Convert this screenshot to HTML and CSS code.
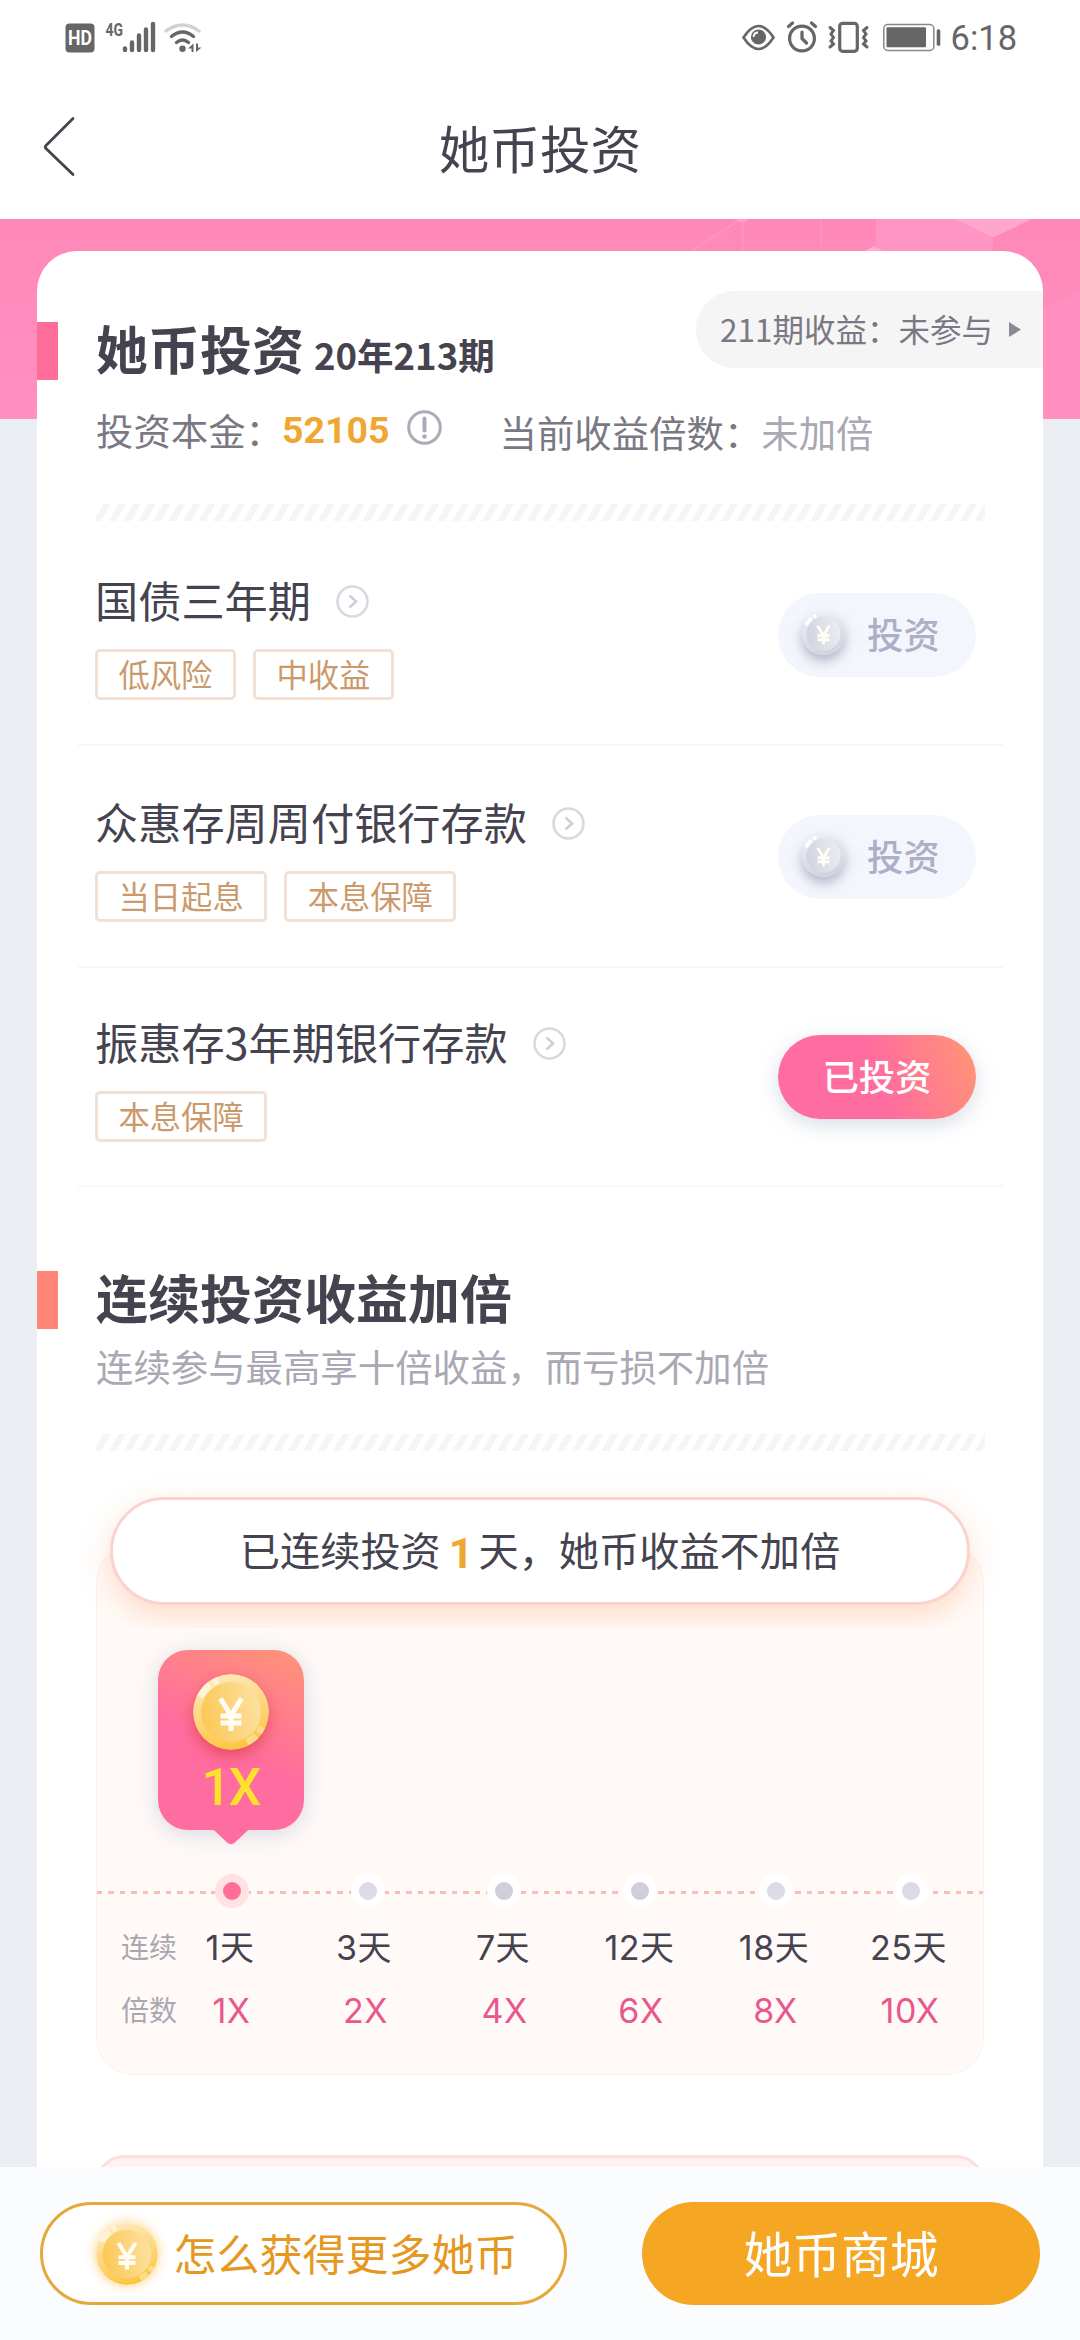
FILE: index.html
```html
<!DOCTYPE html>
<html lang="zh-CN">
<head>
<meta charset="utf-8">
<title>她币投资</title>
<link rel="stylesheet" href="styles.css">
</head>
<body>
<svg width="0" height="0" class="defs" aria-hidden="true">
  <defs>
    <linearGradient id="goldRim" x1="0.3" y1="0" x2="0.6" y2="1"><stop offset="0" stop-color="#ffe9bd"/><stop offset="1" stop-color="#fcc53f"/></linearGradient>
    <linearGradient id="goldFace" x1="0" y1="0.6" x2="1" y2="0.4"><stop offset="0" stop-color="#fbc855"/><stop offset="1" stop-color="#fde0a0"/></linearGradient>
    <linearGradient id="greyRim" x1="0.3" y1="0" x2="0.6" y2="1"><stop offset="0" stop-color="#eceff4"/><stop offset="1" stop-color="#cdd3de"/></linearGradient>
    <linearGradient id="greyFace" x1="0" y1="0.6" x2="1" y2="0.4"><stop offset="0" stop-color="#cfd4de"/><stop offset="1" stop-color="#eaedf2"/></linearGradient>
    <symbol id="yen" viewBox="0 0 76 76"><path d="M27.500 24.500l10.500 17 10.500-17M38 41v16M27.500 42h21M27.500 49h21" fill="none" stroke="#fffdf6" stroke-width="5"/></symbol>
    <symbol id="gold" viewBox="0 0 76 76">
      <circle cx="38" cy="38" r="38" fill="url(#goldRim)"/>
      <circle cx="38" cy="38" r="30" fill="url(#goldFace)"/>
      <path d="M7 23a34 34 0 0 1 10-12M20 8.500a34 34 0 0 1 5-2.500" fill="none" stroke="#fff3d8" stroke-width="7"/>
      <path d="M69 53a34 34 0 0 1-3 6M63 62a34 34 0 0 1-9 6" fill="none" stroke="#fddc8c" stroke-width="7"/>
      <use href="#yen"/>
    </symbol>
    <symbol id="grey" viewBox="0 0 76 76">
      <circle cx="38" cy="38" r="38" fill="url(#greyRim)"/>
      <circle cx="38" cy="38" r="30" fill="url(#greyFace)"/>
      <path d="M7 23a34 34 0 0 1 10-12M20 8.500a34 34 0 0 1 5-2.500" fill="none" stroke="#fff" stroke-width="7"/>
      <use href="#yen"/>
    </symbol>
    <symbol id="more" viewBox="0 0 33 33"><circle cx="16.500" cy="16.500" r="15" fill="none" stroke="#d9d8e1" stroke-width="2.600"/><path d="M13.500 10.500l6.500 6-6.500 6" fill="none" stroke="#d0cfd9" stroke-width="2.600"/></symbol>
  </defs>
</svg>
<div class="page">
  <div class="status">
    <svg class="status-left" width="140" height="50" viewBox="64 11 140 50">
      <rect x="65.500" y="23.500" width="29" height="29" rx="4" fill="#666"/>
      <text x="68" y="45" class="hd" textLength="24" lengthAdjust="spacingAndGlyphs">HD</text>
      <text x="105.500" y="35.500" class="net" textLength="17.500" lengthAdjust="spacingAndGlyphs">4G</text>
      <g stroke="#666" stroke-width="4.400" stroke-linecap="round">
        <path d="M125 48.500v1.500M132 42.500v7.500M139 35.500v14.500M146 29.500v20.500M153 24v26"/>
      </g>
      <g fill="none" stroke-linecap="round" stroke-width="3.400">
        <path d="M166 31q16.500-12 33 0" stroke="#d2d2d2"/>
        <path d="M171.500 36.500q11-9 22 0" stroke="#666"/>
        <path d="M176.500 42.500q6-5 12 0" stroke="#666"/>
      </g>
      <circle cx="182.500" cy="48.700" r="3.200" fill="#666"/>
      <path d="M188 48.500l5.500-5V52h-2v-3.500zM196 43.500v8.500l5.500-4.500h-3.500v-4z" fill="#666"/>
    </svg>
    <svg class="status-right" width="275" height="50" viewBox="741 11 275 50">
      <path d="M743.500 37.500Q758.500 14.500 773.500 37.500Q758.500 60.500 743.500 37.500z" fill="none" stroke="#666" stroke-width="2.600"/>
      <circle cx="758.500" cy="37" r="7.600" fill="#666"/><path d="M753.500 37q.5-4.500 4.500-4.500" fill="none" stroke="#fff" stroke-width="1.800"/>
      <g fill="none" stroke="#666" stroke-width="3.200" stroke-linecap="round">
        <circle cx="802" cy="38.500" r="12.400"/>
        <path d="M802 32v6.500l4.500 4.500M788.500 26.500l4-3.500M815.500 26.500l-4-3.500"/>
        <rect x="839.700" y="23.300" width="17.600" height="28" rx="3"/>
        <path d="M830 27.500l3.500 3-2.500 3.500 2.500 3.500-2.500 3.500 2.500 3-3.500 3M867 27.500l-3.500 3 2.500 3.500-2.500 3.500 2.500 3.500-2.500 3 3.500 3" stroke-width="3"/>
      </g>
      <rect x="883.800" y="24.500" width="50" height="26" rx="4" fill="none" stroke="#888" stroke-width="1.500"/>
      <rect x="886.500" y="27.300" width="39.500" height="20" rx="1" fill="#666"/>
      <rect x="936.700" y="29.300" width="3.600" height="16.500" rx="1.500" fill="#666"/>
      <text x="950.500" y="50" class="clock">6:18</text>
    </svg>
  </div>
  <div class="nav">
    <svg class="back" width="34" height="62" viewBox="0 0 34 62"><path d="M31 2.500L4 29.500q-1.500 1.500 0 3L31 58.500" fill="none" stroke="#45434f" stroke-width="2.800" stroke-linecap="round"/></svg>
    <h1>她币投资</h1>
  </div>
  <main class="main">
    <svg class="banner" width="1080" height="200" viewBox="0 219 1080 200">
      <defs><linearGradient id="bg" x1="0" y1="0" x2="0" y2="1"><stop offset="0" stop-color="#ff88b7"/><stop offset="1" stop-color="#ff90c2"/></linearGradient></defs>
      <rect y="219" width="1080" height="200" fill="url(#bg)"/>
      <path d="M876 219h79l38 18v14H876z" fill="#ff95c2"/>
      <path d="M955 219h77l-39 18.500z" fill="#ffa7cb"/>
      <path d="M865 251l9-5 9 5z" fill="#ffacd0"/>
      <path d="M1040 309l40-16v126h-40z" fill="#ff90c0"/>
      <path d="M690 252l48-31M743 219v33M821 219v33" stroke="#ff95c0" stroke-width="1.500"/>
      <circle cx="742" cy="217" r="6" fill="#ff9ec6"/>
    </svg>
    <section class="card">
      <header class="head">
        <i class="mark mark-pink"></i>
        <h2>她币投资<small>20年213期</small></h2>
        <a class="last">211期收益：未参与<svg width="12" height="15" viewBox="0 0 12 15"><path d="M0 0l12 7.500L0 15z" fill="#8b8996"/></svg></a>
      </header>
      <div class="meta">
        <span>投资本金：</span><b>52105</b>
        <svg width="35" height="35" viewBox="0 0 35 35"><circle cx="17.500" cy="17.500" r="15.800" fill="none" stroke="#adabb8" stroke-width="3"/><path d="M17.500 8.500v12" stroke="#adabb8" stroke-width="4" stroke-linecap="round"/><circle cx="17.500" cy="26.500" r="2.300" fill="#adabb8"/></svg>
        <span class="times">当前收益倍数：<em>未加倍</em></span>
      </div>
      <div class="stripes"></div>

      <div class="item">
        <div class="info">
          <h3>国债三年期<svg width="33" height="33"><use href="#more"/></svg></h3>
          <div class="tags"><span>低风险</span><span>中收益</span></div>
        </div>
        <a class="btn"><svg class="coin-grey" width="43" height="43"><use href="#grey"/></svg>投资</a>
      </div>
      <div class="item">
        <div class="info">
          <h3>众惠存周周付银行存款<svg width="33" height="33"><use href="#more"/></svg></h3>
          <div class="tags"><span>当日起息</span><span>本息保障</span></div>
        </div>
        <a class="btn"><svg class="coin-grey" width="43" height="43"><use href="#grey"/></svg>投资</a>
      </div>
      <div class="item">
        <div class="info">
          <h3>振惠存3年期银行存款<svg width="33" height="33"><use href="#more"/></svg></h3>
          <div class="tags"><span>本息保障</span></div>
        </div>
        <a class="btn done">已投资</a>
      </div>

      <header class="head head-streak">
        <i class="mark mark-coral"></i>
        <h2>连续投资收益加倍</h2>
      </header>
      <p class="sub">连续参与最高享十倍收益，而亏损不加倍</p>
      <div class="stripes"></div>

      <div class="streak">
        <div class="summary">已连续投资<b>1</b>天，她币收益不加倍</div>
        <div class="panel">
          <div class="badge">
            <svg class="coin-badge" width="76" height="76"><use href="#gold"/></svg>
            <strong>1X</strong>
            <svg class="tip" width="40" height="17" viewBox="0 0 40 17"><path d="M0 0h40q-3 .5-5 3L24 13.500q-4 3.500-8 0L5 3q-2-2.500-5-3z" fill="#ff6c9f"/></svg>
          </div>
          <div class="line">
            <i class="dot on"></i><i class="dot"></i><i class="dot dark"></i><i class="dot dark"></i><i class="dot"></i><i class="dot"></i>
          </div>
          <div class="row"><label>连续</label><span>1天</span><span>3天</span><span>7天</span><span>12天</span><span>18天</span><span>25天</span></div>
          <div class="row rate"><label>倍数</label><span>1X</span><span>2X</span><span>4X</span><span>6X</span><span>8X</span><span>10X</span></div>
        </div>
      </div>
      <div class="next"></div>
    </section>
  </main>
  <footer class="foot">
    <a class="earn"><svg class="coin-earn" width="62" height="62"><use href="#gold"/></svg>怎么获得更多她币</a>
    <a class="mall">她币商城</a>
  </footer>
</div>
</body>
</html>
```
FILE: styles.css
```css
* { box-sizing: border-box; margin: 0; padding: 0; }
body { font-family: "Noto Sans CJK SC", "Noto Sans", sans-serif; color: #45434f; background: #fff; }
i, em { font-style: normal; }
svg { display: block; flex: none; }
.defs { position: absolute; }
.page { width: 1080px; height: 2340px; display: flex; flex-direction: column; overflow: hidden; background: #ebeff4; }

.status { height: 78px; background: #fff; display: flex; justify-content: space-between; padding: 11px 64px 0; }
.hd { font: bold 19.500px Roboto, sans-serif; fill: #fff; }
.net { font: bold 19px Roboto, sans-serif; fill: #666; }
.clock { font: 34.500px Roboto, sans-serif; fill: #666; }

.nav { height: 141px; background: #fff; display: grid; grid-template-columns: 74px 1fr 74px; align-items: center; }
.back { margin: 0 0 4px 41.500px; }
.nav h1 { font-size: 50.600px; line-height: 60px; font-weight: 400; text-align: center; padding-bottom: 3px; }

.main { flex: 1; min-height: 0; position: relative; overflow: hidden; }
.banner { position: absolute; left: 0; top: 0; }
.card { position: relative; margin: 32px 37px 0; height: 2000px; background: #fff; border-radius: 40px 40px 0 0; padding-top: 40px; }

.head { display: flex; align-items: flex-start; height: 85px; }
.mark { width: 21px; height: 58px; margin-top: 31px; flex: none; }
.mark-pink { background: #ff6e9b; }
.mark-coral { background: #ff8577; }
.head h2 { font-size: 52px; line-height: 60px; margin: 26.500px 0 0 38px; font-weight: 700; white-space: nowrap; }
.head small { font-size: 36.500px; font-weight: 700; margin-left: 10px; }
.last { margin-left: auto; width: 347px; height: 77px; border-radius: 38px 0 0 38px; background: #f5f5f5; color: #7a7884; font-size: 31.500px; line-height: 70px; padding: 0 0 3px 24px; display: flex; align-items: center; white-space: nowrap; }
.last svg { margin: 3px 0 0 16px; }
.meta { display: flex; align-items: center; height: 40px; margin: 34px 0 0 59px; font-size: 37.400px; line-height: 40px; color: #7a7884; white-space: nowrap; }
.meta b { font: bold 37.500px/38px Roboto, sans-serif; color: #f0a732; margin-left: -1px; }
.meta svg { margin-left: 17px; margin-top: -5px; }
.times { margin: 4px 0 0 58px; }
.times em { color: #a9a8b4; }
.stripes { height: 17px; margin: 54px 58px 0 59px; background: repeating-linear-gradient(120deg, #fff 0 6.500px, #f5f5f5 6.500px 12.930px); }

.item { display: flex; justify-content: space-between; align-items: flex-start; margin: 0 40px 0 41px; padding: 45px 27px 44px 17px; border-bottom: 2px solid #f7f7f7; }
.stripes + .item { padding-top: 48px; }
.item:nth-of-type(5) { padding-top: 43px; padding-bottom: 43px; }
.item h3 { font-size: 43.200px; line-height: 60px; font-weight: 400; display: flex; align-items: center; white-space: nowrap; }
.item h3 svg { margin: 4px 0 0 25px; }
.tags { display: flex; gap: 17px; margin-top: 20px; }
.tags span { height: 51px; border: 3px solid #f2e0d4; border-radius: 5px; padding: 0 20.500px; font-size: 31.300px; line-height: 43px; color: #cb9a6c; }
.btn { width: 198px; height: 84px; margin-top: 24px; border-radius: 42px; background: #f3f6fc; display: flex; align-items: center; padding: 0 0 4px 24px; font-size: 36.400px; font-weight: 500; color: #b0aec6; white-space: nowrap; }
.coin-grey { margin-right: 22px; border-radius: 50%; box-shadow: 0 6px 12px rgba(120, 115, 150, .5); }
.btn.done { justify-content: center; padding-left: 0; color: #fff; background: linear-gradient(70deg, #ff6c9f 50%, #ff9277 95%); box-shadow: 0 6px 20px rgba(100, 120, 160, .25); }

.head-streak { margin-top: 53px; }
.sub { margin: 21px 0 0 59px; font-size: 37.400px; line-height: 40px; color: #a9a8b4; white-space: nowrap; }
.sub + .stripes { margin-top: 48px; }

.streak { margin: 46px 59px 0; }
.summary { position: relative; z-index: 1; margin: 0 14px 0 14px; height: 108px; border: 3px solid #fad3d1; border-radius: 54px; background: #fff; box-shadow: 0 10px 30px rgba(255, 140, 70, .28); clip-path: inset(-40px -60px -23px); display: flex; justify-content: center; font-size: 40.200px; line-height: 98px; white-space: nowrap; }
.summary b { font: bold 43px/106px Roboto, sans-serif; color: #f0a732; margin: 0 5px 0 8px; }
.panel { margin-top: -60px; height: 530px; padding-top: 104px; background: #fffaf8; border: 1.500px solid #fff0ea; border-radius: 38px; }
.badge { position: relative; width: 146px; height: 180px; margin-left: 60.500px; border-radius: 30px; background: linear-gradient(25deg, #ff6c9f 45%, #ff9377 98%); box-shadow: 0 4px 22px rgba(110, 115, 160, .25); display: flex; flex-direction: column; align-items: center; padding-top: 24px; }
.coin-badge { border-radius: 50%; box-shadow: 0 6px 14px rgba(215, 60, 50, .6); }
.badge strong { font: 500 51.500px/60px Roboto, sans-serif; letter-spacing: -2px; color: #fde12d; margin-top: 8px; }
.tip { position: absolute; left: 53px; top: 179px; }
.line { display: grid; grid-template-columns: 135px 136px 136px 136px 136px 134px; justify-items: center; height: 34px; margin-top: 44px; padding-left: 67.500px; background: repeating-linear-gradient(90deg, #f8bdb9 0 5.500px, transparent 5.500px 11.450px) 0 17px / 100% 3px no-repeat; }
.dot { width: 34px; height: 34px; border-radius: 50%; border: 8px solid #fff; background: #dcdbe5; }
.dot.dark { background: #cfced9; }
.dot.on { border-color: #ffe2e2; background: #ff6e96; }
.row { display: grid; grid-template-columns: 67px 132px 136px 142px 131px 138px 131px; height: 63px; line-height: 40px; margin-top: 19.500px; font-family: Inter, "Noto Sans CJK SC", sans-serif; }
.row label { padding-left: 24px; font-size: 28px; color: #a9a8b0; white-space: nowrap; }
.row span { text-align: center; font-size: 34px; letter-spacing: .5px; }
.row.rate { margin-top: 0; }
.rate span { padding-left: 3px; color: #e8588d; }
.next { height: 200px; margin: 80px 59px 0; border: 3px solid #fae0de; border-radius: 28px; background: #fff3f2; }

.foot { height: 173px; background: #fbfcfe; display: flex; justify-content: space-between; padding: 35px 40px 0; }
.foot a { height: 103px; border-radius: 52px; display: flex; align-items: center; white-space: nowrap; }
.earn { width: 527px; background: #fff; border: 3px solid #e5a83c; padding: 0 0 4px 53px; font-size: 43px; color: #e5981f; }
.coin-earn { margin-top: 5px; margin-right: 15.500px; border-radius: 50%; box-shadow: 0 0 12px rgba(252, 190, 70, .7); }
.mall { width: 398px; background: #f5a623; justify-content: center; padding-bottom: 5px; font-size: 48.800px; color: #fff; }
```
